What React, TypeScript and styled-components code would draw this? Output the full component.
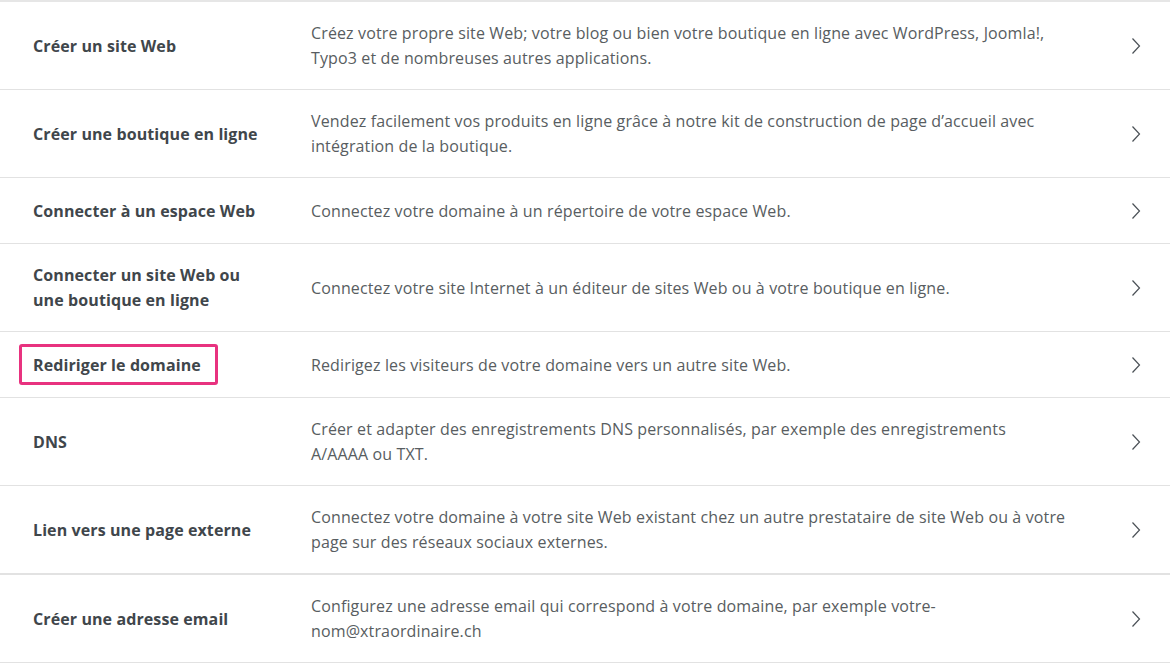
import React from 'react'
import styled, { createGlobalStyle } from 'styled-components'

const GlobalStyle = createGlobalStyle`
  body {
    margin: 0;
    background: #fff;
    font-family: "Open Sans", "Liberation Sans", sans-serif;
  }
`

interface Entry {
  title: string
  text: string
  highlight?: boolean
  thickTop?: boolean
}

const entries: Entry[] = [
  {
    title: 'Créer un site Web',
    text: 'Créez votre propre site Web; votre blog ou bien votre boutique en ligne avec WordPress, Joomla!, Typo3 et de nombreuses autres applications.',
  },
  {
    title: 'Créer une boutique en ligne',
    text: 'Vendez facilement vos produits en ligne grâce à notre kit de construction de page d’accueil avec intégration de la boutique.',
  },
  {
    title: 'Connecter à un espace Web',
    text: 'Connectez votre domaine à un répertoire de votre espace Web.',
  },
  {
    title: 'Connecter un site Web ou une boutique en ligne',
    text: 'Connectez votre site Internet à un éditeur de sites Web ou à votre boutique en ligne.',
  },
  {
    title: 'Rediriger le domaine',
    text: 'Redirigez les visiteurs de votre domaine vers un autre site Web.',
    highlight: true,
  },
  {
    title: 'DNS',
    text: 'Créer et adapter des enregistrements DNS personnalisés, par exemple des enregistrements A/AAAA ou TXT.',
  },
  {
    title: 'Lien vers une page externe',
    text: 'Connectez votre domaine à votre site Web existant chez un autre prestataire de site Web ou à votre page sur des réseaux sociaux externes.',
  },
  {
    title: 'Créer une adresse email',
    text: 'Configurez une adresse email qui correspond à votre domaine, par exemple votre-nom@xtraordinaire.ch',
    thickTop: true,
  },
]

function Chevron() {
  return (
    <svg width="10" height="18" viewBox="0 0 10 18" fill="none">
      <path d="M1.5 1.5 L8.5 9 L1.5 16.5" stroke="#4a5056" strokeWidth="1.2" />
    </svg>
  )
}

export default function App() {
  return (
    <>
      <GlobalStyle />
      <List>
        {entries.map(e => (
          <Row key={e.title} $thickTop={e.thickTop}>
            <Title>
              {e.highlight ? <Marked>{e.title}</Marked> : e.title}
            </Title>
            <Text>{e.text}</Text>
            <Arrow>
              <Chevron />
            </Arrow>
          </Row>
        ))}
      </List>
    </>
  )
}

const List = styled.div`
  border-top: 2px solid #e6e6e6;
  width: 1170px;
`

const Row = styled.div<{ $thickTop?: boolean }>`
  display: grid;
  grid-template-columns: 278px 1fr 60px;
  align-items: center;
  box-sizing: border-box;
  min-height: 66px;
  padding: 19px 0 18px 33px;
  border-bottom: 1px solid #e2e2e2;
  ${p => p.$thickTop && 'border-top: 1px solid #e2e2e2;'}
`

const Title = styled.div`
  font-size: 16px;
  font-weight: 700;
  line-height: 25px;
  letter-spacing: 0.1px;
  color: #40464b;
  padding-right: 40px;
`

const Marked = styled.span`
  position: relative;
  &::after {
    content: '';
    position: absolute;
    left: -14px;
    right: -17px;
    top: -10px;
    bottom: -9px;
    border: 3px solid #e8327f;
    border-radius: 3px;
  }
`

const Text = styled.div`
  max-width: 755px;
  font-size: 16px;
  line-height: 25px;
  letter-spacing: 0.13px;
  color: #585d61;
`

const Arrow = styled.div`
  display: flex;
  justify-content: flex-start;
  padding-left: 21px;
`
